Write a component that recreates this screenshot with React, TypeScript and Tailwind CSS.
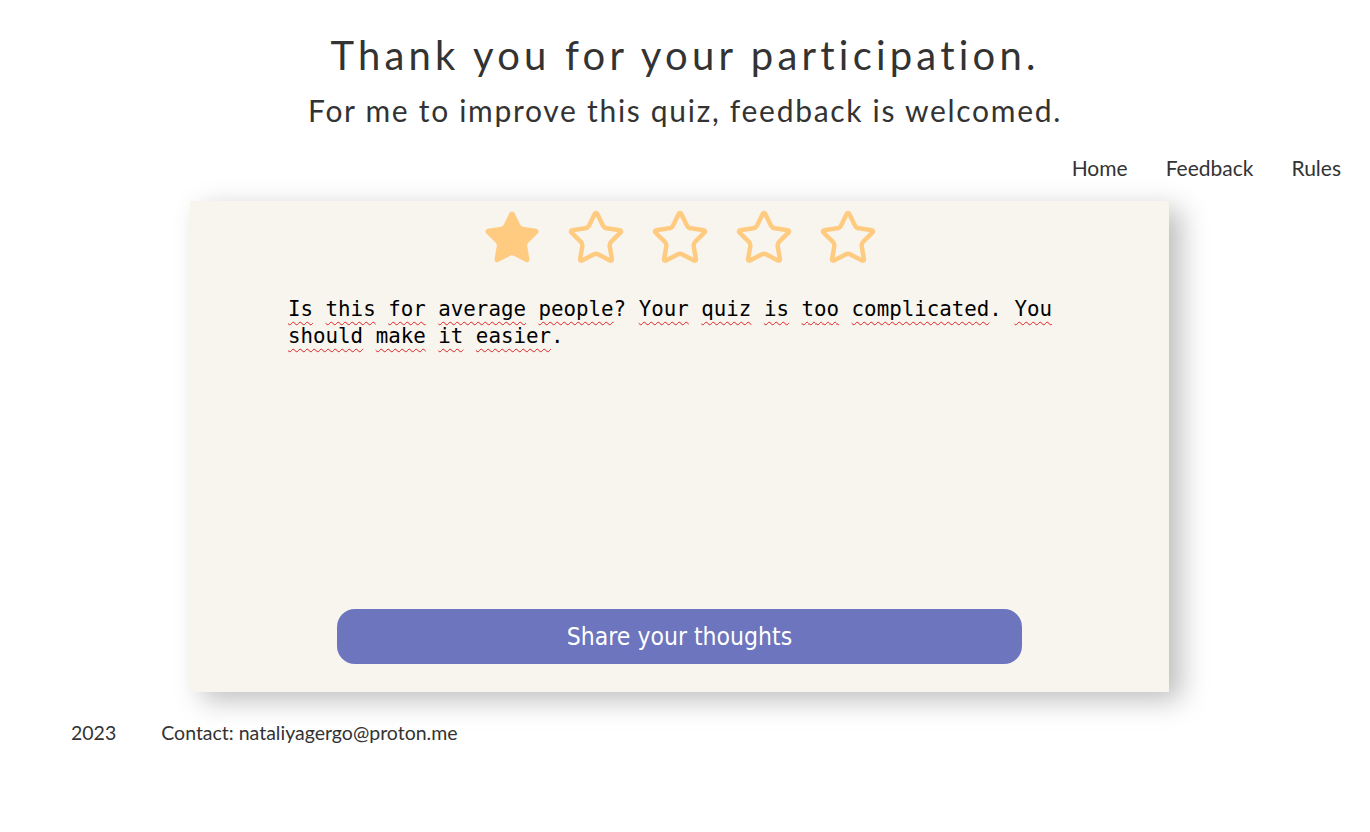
import React from "react";

const StarIcon = ({ filled }: { filled: boolean }) => (
  <svg width="60" height="60" viewBox="0 0 24 24" fill={filled ? "#ffcb80" : "none"} stroke="#ffcb80" strokeWidth={filled ? 1.2 : 1.8} strokeLinecap="round" strokeLinejoin="round">
    <path d="M11.525 2.295a.53.53 0 0 1 .95 0l2.31 4.679a2.123 2.123 0 0 0 1.595 1.16l5.166.756a.53.53 0 0 1 .294.904l-3.736 3.638a2.123 2.123 0 0 0-.611 1.878l.882 5.14a.53.53 0 0 1-.771.56l-4.618-2.428a2.122 2.122 0 0 0-1.973 0L6.396 21.01a.53.53 0 0 1-.77-.56l.881-5.139a2.122 2.122 0 0 0-.611-1.879L2.16 9.795a.53.53 0 0 1 .294-.906l5.165-.755a2.122 2.122 0 0 0 1.597-1.16z" />
  </svg>
);

const words1 = ["Is", "this", "for", "average", "people?", "Your", "quiz", "is", "too", "complicated.", "You"];
const words2 = ["should", "make", "it", "easier."];

const Word = ({ w }: { w: string }) => {
  const m = w.match(/^([A-Za-z]+)(.*)$/);
  const core = m ? m[1] : w;
  const rest = m ? m[2] : "";
  return (
    <>
      <span className="underline decoration-wavy decoration-[#e02020] decoration-[1px] underline-offset-[5px]">{core}</span>
      {rest}
    </>
  );
};

const Line = ({ words }: { words: string[] }) => (
  <div>
    {words.map((w, i) => (
      <React.Fragment key={i}>
        {i > 0 && " "}
        <Word w={w} />
      </React.Fragment>
    ))}
  </div>
);

export default function App() {
  return (
    <div className="min-h-[832px] bg-white text-[#333] font-['Lato',sans-serif]">
      <header className="flex flex-col items-center pt-[30px]">
        <h1 className="text-[40px] leading-[50px] tracking-[4.2px] font-normal text-[#333]">
          Thank you for your participation.
        </h1>
        <h2 className="mt-[11px] text-[30px] leading-[38px] tracking-[1.7px] font-normal text-[#333]">
          For me to improve this quiz, feedback is welcomed.
        </h2>
      </header>
      <nav className="flex justify-end gap-[38px] pr-[29px] mt-[26px] text-[21px] leading-[26px] text-[#333]">
        <a>Home</a>
        <a>Feedback</a>
        <a>Rules</a>
      </nav>
      <main className="ml-[190px] mt-[20px] w-[979px] h-[491px] bg-[#f8f5ef] shadow-[12px_8px_26px_rgba(0,0,0,0.26)] flex flex-col items-center">
        <div className="flex gap-[24px] mt-[7px]">
          {[true, false, false, false, false].map((f, i) => (
            <StarIcon key={i} filled={f} />
          ))}
        </div>
        <div className="self-start ml-[98px] mt-[28px] w-[790px] text-[20.8px] leading-[27px] text-black font-['DejaVu_Sans_Mono','Liberation_Mono',monospace]">
          <Line words={words1} />
          <Line words={words2} />
        </div>
        <div className="flex-1" />
        <button className="mb-[28px] w-[685px] h-[55px] rounded-[18px] bg-[#6c75bd] text-white text-[24.5px] leading-[32px] font-['DejaVu_Sans_Condensed','Noto_Sans',sans-serif]">
          Share your thoughts
        </button>
      </main>
      <footer className="flex gap-[45px] pl-[71px] mt-[29px] text-[19.5px] leading-[24px] text-[#333]">
        <span>2023</span>
        <span>Contact: nataliyagergo@proton.me</span>
      </footer>
    </div>
  );
}
